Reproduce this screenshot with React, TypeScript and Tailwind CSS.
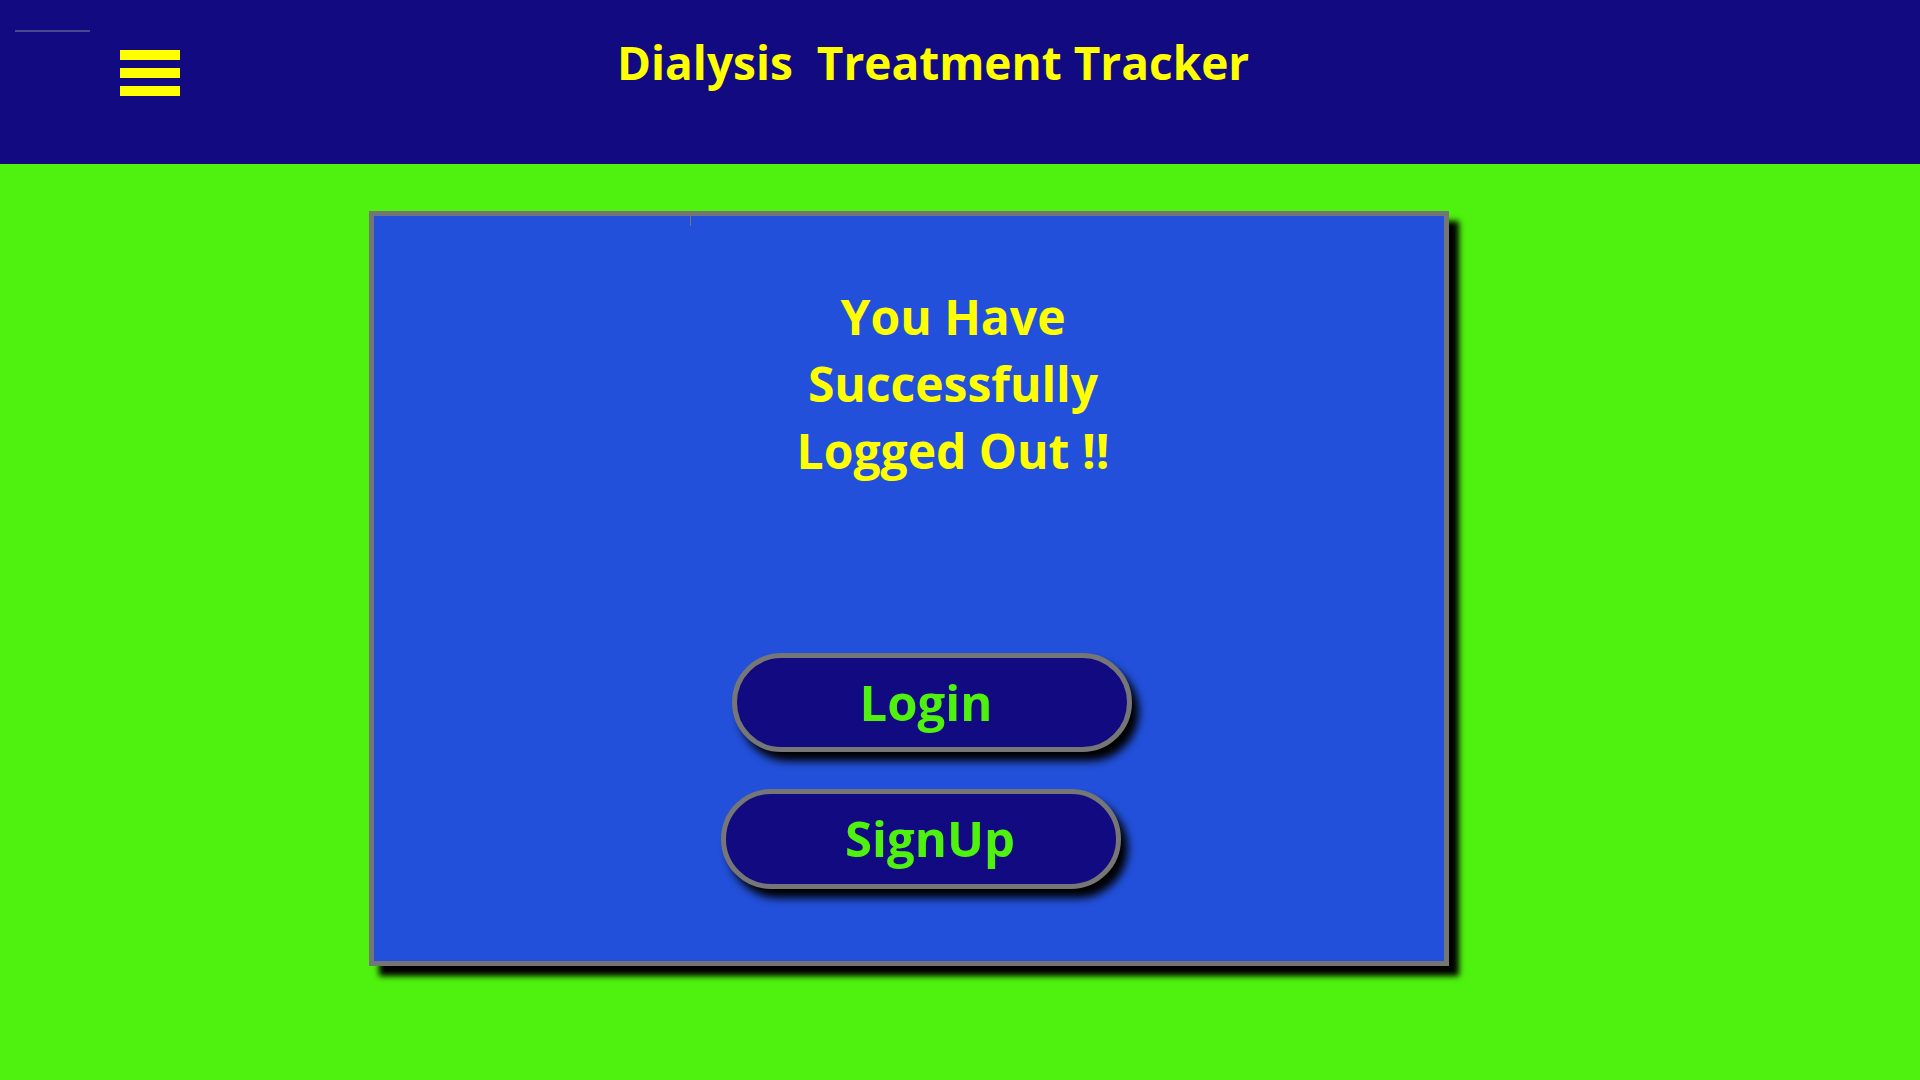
export default function App() {
  return (
    <div className="min-h-screen w-full bg-[#4ff20f] font-['Open_Sans','Noto_Sans',sans-serif] font-bold">
      {/* header */}
      <header className="relative h-[164px] bg-[#110a80]">
        <div className="absolute left-[15px] top-[30px] h-[2px] w-[75px] bg-[#4b4690]"></div>
        <div className="flex items-start pl-[120px] pt-[50px]">
          <div className="flex flex-col gap-[8px]">
            <span className="block h-[10px] w-[60px] bg-[#ffff00]"></span>
            <span className="block h-[10px] w-[60px] bg-[#ffff00]"></span>
            <span className="block h-[10px] w-[60px] bg-[#ffff00]"></span>
          </div>
          <h1 className="ml-[437px] -mt-[20px] whitespace-pre text-[46px] leading-[1.4] text-[#ffff00]">
            Dialysis  Treatment Tracker
          </h1>
        </div>
      </header>

      {/* card */}
      <main className="pt-[47px]">
        <div className="relative ml-[369px] h-[755px] w-[1080px] border-[5px] border-[#757575] bg-[#2250da] shadow-[10px_10px_6px_#000]">
          <div className="absolute left-[316px] top-0 h-[10px] w-[1px] bg-[#757575]"></div>
          <div className="flex justify-center pl-[88px] pt-[67px]">
            <p className="text-center text-[48px] leading-[67px] text-[#ffff00]">
              You Have
              <br />
              Successfully
              <br />
              Logged Out !!
            </p>
          </div>
          <div className="mt-[169px] flex flex-col">
            <button className="ml-[358px] h-[99px] w-[400px] rounded-full border-[5px] border-[#767676] bg-[#110a80] pr-[12px] text-[49px] text-[#4ff20f] shadow-[7px_9px_8px_#000]">
              Login
            </button>
            <button className="ml-[347px] mt-[37px] h-[100px] w-[400px] rounded-full border-[5px] border-[#767676] bg-[#110a80] pl-[18px] text-[49px] text-[#4ff20f] shadow-[7px_9px_8px_#000]">
              SignUp
            </button>
          </div>
        </div>
      </main>
    </div>
  );
}
